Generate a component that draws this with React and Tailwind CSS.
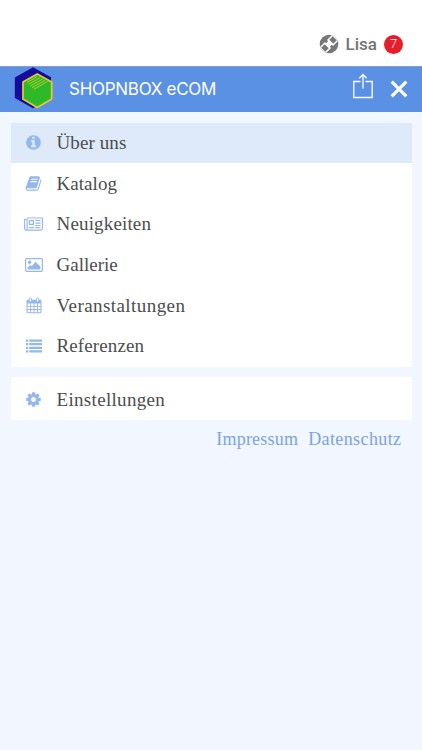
const InfoIcon = () => (
  <svg viewBox="0 0 1792 1792" className="h-[17px] w-[17px]" fill="currentColor">
    <path d="M1152 1376v-160q0-14-9-23t-23-9h-96v-512q0-14-9-23t-23-9h-320q-14 0-23 9t-9 23v160q0 14 9 23t23 9h96v320h-96q-14 0-23 9t-9 23v160q0 14 9 23t23 9h448q14 0 23-9t9-23zm-128-896v-160q0-14-9-23t-23-9h-192q-14 0-23 9t-9 23v160q0 14 9 23t23 9h192q14 0 23-9t9-23zm640 416q0 209-103 385.500t-279.500 279.500-385.500 103-385.500-103-279.500-279.500-103-385.500 103-385.500 279.500-279.500 385.500-103 385.500 103 279.500 279.500 103 385.500z" />
  </svg>
);

const BookIcon = () => (
  <svg viewBox="0 0 1792 1792" className="h-[17px] w-[17px]" fill="currentColor">
    <path d="M1703 478q40 57 18 129l-275 906q-19 64-76.500 107.500t-122.500 43.500h-923q-77 0-148.500-53.500t-99.500-131.500q-24-67-2-127 0-4 3-27t4-37q1-8-3-21.500t-3-19.500q2-11 8-21t16.500-23.500 16.500-23.500q23-38 45-91.500t30-91.500q3-10 .5-30t-.5-28q3-11 17-28t17-23q21-36 42-92t25-90q1-9-2.500-32t.5-28q4-13 22-30.500t22-22.500q19-26 42.500-84.500t27.500-96.500q1-8-3-25.500t-2-26.500q2-8 9-18t18-23 17-21q8-12 16.500-30.500t15-35 16-36 19.500-32 26.500-23.500 36-11.500 47.500 5.500l-1 3q38-9 51-9h761q74 0 114 56t18 130l-274 906q-36 119-71.500 153.500t-128.500 34.500h-869q-27 0-38 15-11 16-1 43 24 70 144 70h923q29 0 56-15.500t35-41.500l300-987q7-22 5-57 38 15 59 43zm-1064 2q-4 13 2 22.500t20 9.500h608q13 0 25.500-9.500t16.500-22.500l21-64q4-13-2-22.500t-20-9.500h-608q-13 0-25.500 9.500t-16.500 22.500zm-83 256q-4 13 2 22.500t20 9.500h608q13 0 25.500-9.500t16.500-22.500l21-64q4-13-2-22.500t-20-9.500h-608q-13 0-25.500 9.500t-16.500 22.500z" />
  </svg>
);

const NewsIcon = () => (
  <svg viewBox="0 0 19 14" className="h-[14px] w-[19px]" fill="none" stroke="currentColor" strokeWidth="1.1">
    <path d="M3.1 1h15.3v10.6a1.5 1.5 0 0 1-1.5 1.5H2a1.4 1.4 0 0 1-1.4-1.4V2.3h2.5v9.4a1.3 1.3 0 0 1-1.2 1.4" />
    <path d="M5.4 3.6h4v3.8h-4z" strokeWidth="1.3" />
    <path d="M11.3 3.5h5.2M11.3 6.1h5.2M11.3 8.5h5.2M4.8 10.7h5.3M11.3 10.7h5.2" strokeWidth="1.2" />
  </svg>
);

const PictureIcon = () => (
  <svg viewBox="0 0 18 14" className="h-[14px] w-[18px]">
    <rect x=".6" y=".6" width="16.8" height="12.8" rx="1.2" fill="none" stroke="currentColor" strokeWidth="1.2" />
    <circle cx="4.6" cy="4.3" r="1.7" fill="currentColor" />
    <path d="M2.7 11.5V9.4l2.5-2.5 1.4 1.4 4-4.500 4.700 4.600v3.100z" fill="currentColor" />
  </svg>
);

const CalendarIcon = () => (
  <svg viewBox="0 0 16 17" className="h-[17px] w-4">
    <path d="M1.500 2.700h13a1 1 0 0 1 1 1V15a1.200 1.200 0 0 1-1.200 1.200H1.700A1.200 1.200 0 0 1 .5 15V3.700a1 1 0 0 1 1-1zM1.600 6.400v2.500h2.600V6.400zm3.500 0v2.500h2.500V6.400zm3.400 0v2.500H11V6.400zm3.400 0v2.500h2.500V6.400zM1.600 9.700v2.400h2.600V9.700zm3.500 0v2.400h2.500V9.700zm3.400 0v2.400H11V9.700zm3.400 0v2.400h2.500V9.700zM1.600 12.900v2.300h2.600v-2.300zm3.500 0v2.300h2.500v-2.300zm3.400 0v2.300H11v-2.300zm3.400 0v2.300h2.500v-2.300z" fill="currentColor" fillRule="evenodd" />
    <rect x="3.300" y=".8" width="2.200" height="4" rx="1" fill="white" stroke="currentColor" strokeWidth=".9" />
    <rect x="10.500" y=".8" width="2.200" height="4" rx="1" fill="white" stroke="currentColor" strokeWidth=".9" />
  </svg>
);

const ListIcon = () => (
  <svg viewBox="0 0 16 14" className="h-[14px] w-4" fill="currentColor">
    <path d="M0 .5h2.300v2.200H0zM3.300.5H16v2.200H3.300zM0 4.100h2.300v2.200H0zM3.300 4.100H16v2.200H3.300zM0 7.700h2.300v2.200H0zM3.300 7.700H16v2.200H3.300zM0 11.300h2.300v2.200H0zM3.300 11.300H16v2.200H3.300z" />
  </svg>
);

const GearIcon = () => (
  <svg viewBox="0 0 1792 1792" className="h-[17px] w-[17px]" fill="currentColor">
    <path d="M1152 896q0-106-75-181t-181-75-181 75-75 181 75 181 181 75 181-75 75-181zm512-109v222q0 12-8 23t-20 13l-185 28q-19 54-39 91 35 50 107 138 10 12 10 25t-9 23q-27 37-99 108t-94 71q-12 0-26-9l-138-108q-44 23-91 38-16 136-29 186-7 28-36 28h-222q-14 0-24.500-8.500t-11.500-21.500l-28-184q-49-16-90-37l-141 107q-10 9-25 9-14 0-25-11-126-114-165-168-7-10-7-23 0-12 8-23 15-21 51-66.500t54-70.500q-27-50-41-99l-183-27q-13-2-21-12.500t-8-23.500v-222q0-12 8-23t19-13l186-28q14-46 39-92-40-57-107-138-10-12-10-24 0-10 9-23 26-36 98.500-107.500t94.500-71.500q13 0 26 10l138 107q44-23 91-38 16-136 29-186 7-28 36-28h222q14 0 24.500 8.500t11.500 21.500l28 184q49 16 90 37l142-107q9-9 24-9 13 0 25 10 129 119 165 170 7 8 7 22 0 12-8 23-15 21-51 66.500t-54 70.500q26 50 41 98l183 28q13 2 21 12.500t8 23.500z" />
  </svg>
);

const Logo = () => (
  <svg viewBox="0 0 40 42" className="mb-[3px] h-[42px] w-10">
    <path d="M19 .3 37 10.300V31L19 41.200.8 31V10.500z" fill="#160c9c" />
    <path d="M23.200 7 37.700 15v17l-14.500 8.500L9 32V15z" fill="#2db928" stroke="#e2c634" strokeWidth="1.800" />
    <path d="M13 15.500 23 9.700M14.600 17.300 26 10.800M16.300 19 28.800 11.900M18 20.700l13.300-7.500M19.800 22.300l13.700-7.800" stroke="#cdd02e" strokeWidth=".85" />
  </svg>
);

const BrandMark = () => (
  <svg viewBox="0 0 20 20" className="h-5 w-5">
    <defs>
      <clipPath id="disc">
        <circle cx="10" cy="10" r="9.300" />
      </clipPath>
    </defs>
    <g clipPath="url(#disc)">
      <path d="M0 0h20v20H0z" fill="#777" />
      <g transform="rotate(-45 10 10)">
        <path d="M-1 5.700h22v8.600H-1z" fill="white" />
        <path d="M1.800 7.200h5v5.600h-5zM13.200 7.200h5v5.600h-5zM8.600 5h2.800v2.400H8.600zM8.600 12.600h2.800V15H8.600z" fill="#777" />
      </g>
    </g>
  </svg>
);

const menuItems = [
  { label: 'Über uns', icon: InfoIcon, spacing: 'tracking-[0.1px]', active: true },
  { label: 'Katalog', icon: BookIcon, spacing: 'tracking-[0.05px]' },
  { label: 'Neuigkeiten', icon: NewsIcon, spacing: 'tracking-[0.16px]' },
  { label: 'Gallerie', icon: PictureIcon, spacing: 'tracking-[0px]' },
  { label: 'Veranstaltungen', icon: CalendarIcon, spacing: 'tracking-[0.43px]' },
  { label: 'Referenzen', icon: ListIcon, spacing: 'tracking-[0.12px]' },
];

function MenuRow({ label, icon: Icon, spacing, active, height = 'h-[40.7px]' }) {
  return (
    <a className={`${height} ${active ? 'bg-[#dee9f9]' : ''} flex items-center`}>
      <span className="flex w-[46px] justify-center text-[#94b7ec]">
        <Icon />
      </span>
      <span className={`${spacing} whitespace-nowrap text-[19px] leading-6 text-[#4d4d4d]`}>{label}</span>
    </a>
  );
}

export default function App() {
  return (
    <div className="flex h-[750px] w-[422px] flex-col overflow-hidden bg-[#f2f6ff]">
      {/* Account bar */}
      <div className="flex h-[66px] shrink-0 items-end justify-end bg-white pr-[19px] pb-3 font-['Roboto',sans-serif]">
        <div className="flex h-5 items-center">
          <BrandMark />
          <span className="ml-[7px] text-[17px] leading-5 font-medium text-[#757575]">Lisa</span>
          <span className="ml-[7px] flex h-[19px] w-[19px] items-center justify-center rounded-full bg-[#e51e2b] text-[13px] font-light text-white">
            7
          </span>
        </div>
      </div>

      <header className="flex h-[46px] shrink-0 items-center border-t border-[#7f9fcf] bg-[#5b91e4] pl-[14px] pr-[14px] text-white">
        <Logo />
        <h1 className="ml-[15px] font-['Inter',sans-serif] text-[17px] font-normal tracking-[-0.28px]">SHOPNBOX eCOM</h1>
        <div className="ml-auto flex items-center gap-[17px]">
          <svg viewBox="0 0 20 26" className="mb-[8px] h-[26px] w-5" fill="none" stroke="currentColor" strokeWidth="1.300">
            <path d="M7.500 8.500H.8v16h18.400v-16h-6.700M10 15.500V1.500M6.300 5.200 10 1.500l3.700 3.700" />
          </svg>
          <svg viewBox="0 0 18 18" className="mb-px h-[18px] w-[18px]" stroke="currentColor" strokeWidth="3.200">
            <path d="m1.700 1.700 14.600 14.600M16.300 1.700 1.700 16.300" />
          </svg>
        </div>
      </header>

      <main className="flex flex-col px-[10.500px] pt-[10.500px] font-['Liberation_Serif',serif]">
        <nav className="flex flex-col bg-white">
          {menuItems.map((item) => (
            <MenuRow key={item.label} {...item} />
          ))}
        </nav>

        <nav className="mt-[10px] bg-white pt-[3px]">
          <MenuRow label="Einstellungen" icon={GearIcon} spacing="tracking-[0.32px]" height="h-10" />
        </nav>

        <footer className="mt-[7px] flex justify-end gap-[10px] pr-[10px] text-[18px] leading-6 text-[#7ba4df]">
          <a className="tracking-[0.2px]">Impressum</a>
          <a className="tracking-[0.4px]">Datenschutz</a>
        </footer>
      </main>
    </div>
  );
}
